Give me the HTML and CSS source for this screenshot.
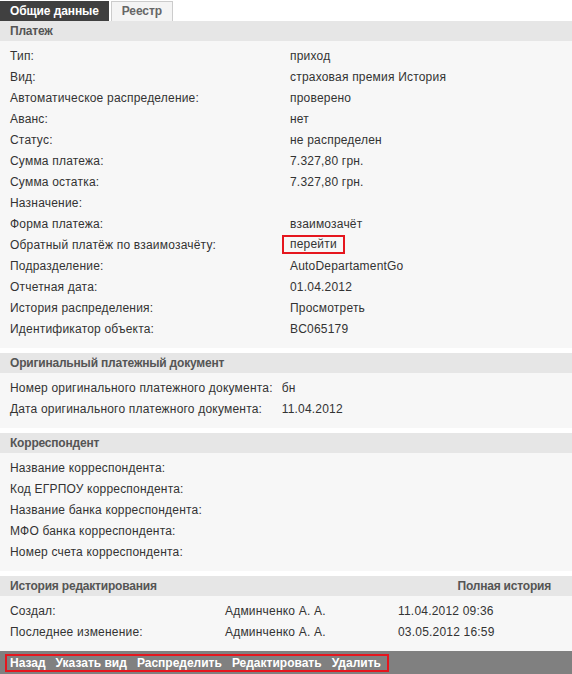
FILE: index.html
```html
<!DOCTYPE html>
<html lang="ru">
<head>
    <meta charset="UTF-8">
    <title>Платеж</title>
    <link rel="stylesheet" href="styles.css">
</head>
<body>
    <div class="tabs">
        <span class="tab active">Общие данные</span>
        <span class="tab">Реестр</span>
    </div>

    <div class="section">
        <div class="section-head">Платеж</div>
        <table class="fields fields-main">
            <tr><td>Тип:</td><td>приход</td></tr>
            <tr><td>Вид:</td><td>страховая премия История</td></tr>
            <tr><td>Автоматическое распределение:</td><td>проверено</td></tr>
            <tr><td>Аванс:</td><td>нет</td></tr>
            <tr><td>Статус:</td><td>не распределен</td></tr>
            <tr><td>Сумма платежа:</td><td>7.327,80 грн.</td></tr>
            <tr><td>Сумма остатка:</td><td>7.327,80 грн.</td></tr>
            <tr><td>Назначение:</td><td></td></tr>
            <tr><td>Форма платежа:</td><td>взаимозачёт</td></tr>
            <tr><td>Обратный платёж по взаимозачёту:</td><td><span class="marked">перейти</span></td></tr>
            <tr><td>Подразделение:</td><td>AutoDepartamentGo</td></tr>
            <tr><td>Отчетная дата:</td><td>01.04.2012</td></tr>
            <tr><td>История распределения:</td><td>Просмотреть</td></tr>
            <tr><td>Идентификатор объекта:</td><td>BC065179</td></tr>
        </table>
    </div>

    <div class="section">
        <div class="section-head">Оригинальный платежный документ</div>
        <table class="fields fields-doc">
            <tr><td>Номер оригинального платежного документа:</td><td>бн</td></tr>
            <tr><td>Дата оригинального платежного документа:</td><td>11.04.2012</td></tr>
        </table>
    </div>

    <div class="section">
        <div class="section-head">Корреспондент</div>
        <table class="fields">
            <tr><td>Название корреспондента:</td><td></td></tr>
            <tr><td>Код ЕГРПОУ корреспондента:</td><td></td></tr>
            <tr><td>Название банка корреспондента:</td><td></td></tr>
            <tr><td>МФО банка корреспондента:</td><td></td></tr>
            <tr><td>Номер счета корреспондента:</td><td></td></tr>
        </table>
    </div>

    <div class="section">
        <div class="section-head split">
            <span>История редактирования</span>
            <span>Полная история</span>
        </div>
        <table class="fields fields-history">
            <tr><td>Создал:</td><td>Админченко А. А.</td><td>11.04.2012 09:36</td></tr>
            <tr><td>Последнее изменение:</td><td>Админченко А. А.</td><td>03.05.2012 16:59</td></tr>
        </table>
    </div>

    <div class="toolbar">
        <div class="actions">
            <span>Назад</span>
            <span>Указать вид</span>
            <span>Распределить</span>
            <span>Редактировать</span>
            <span>Удалить</span>
        </div>
    </div>
</body>
</html>
```

FILE: styles.css
```css
body {
    margin: 0;
    font-family: "Liberation Sans", Arial, sans-serif;
    font-size: 12px;
    color: #333;
    background: #fff;
}
.tabs {
    display: flex;
    gap: 2px;
    padding-top: 1px;
}
.tab {
    height: 18px;
    line-height: 18px;
    padding: 0 10px;
    border: 1px solid #ccc;
    border-bottom: none;
    background: #f4f4f4;
    color: #666;
    font-weight: bold;
    letter-spacing: -0.1px;
}
.tab.active {
    height: 20px;
    line-height: 20px;
    padding: 0 10px;
    border: none;
    background: #404040;
    color: #fff;
}
.tab + .tab {
    height: 19px;
}
.section {
    background: #f7f7f7;
    padding-bottom: 9px;
    margin-bottom: 5px;
}
.section-head {
    height: 20px;
    line-height: 20px;
    padding: 0 21px 0 10px;
    background: #e6e6e6;
    color: #555;
    font-weight: bold;
    letter-spacing: -0.2px;
}
.section-head.split {
    display: flex;
    justify-content: space-between;
}
.fields {
    border-collapse: collapse;
    margin-top: 4px;
    letter-spacing: 0.2px;
}
.fields td {
    height: 21px;
    padding: 0 0 0 10px;
    white-space: nowrap;
}
.fields td + td {
    padding-left: 4px;
}
.fields-main td:first-child {
    width: 276px;
}
.fields-doc td + td {
    padding-left: 9px;
}
.fields-history td:first-child {
    width: 211px;
}
.fields-history td:nth-child(2) {
    width: 169px;
}
.marked {
    display: inline-block;
    line-height: 15px;
    padding: 0 6px 0 6px;
    margin-left: -8px;
    border: 2px solid #e5161e;
}
.toolbar {
    margin-top: -5px;
    height: 23px;
    padding: 3px 0 0 5px;
    background: #808080;
}
.actions {
    display: inline-flex;
    gap: 10px;
    height: 14px;
    line-height: 14px;
    padding: 0 6px 0 3px;
    border: 2px solid #e5161e;
    color: #fff;
    font-weight: bold;
}
```
